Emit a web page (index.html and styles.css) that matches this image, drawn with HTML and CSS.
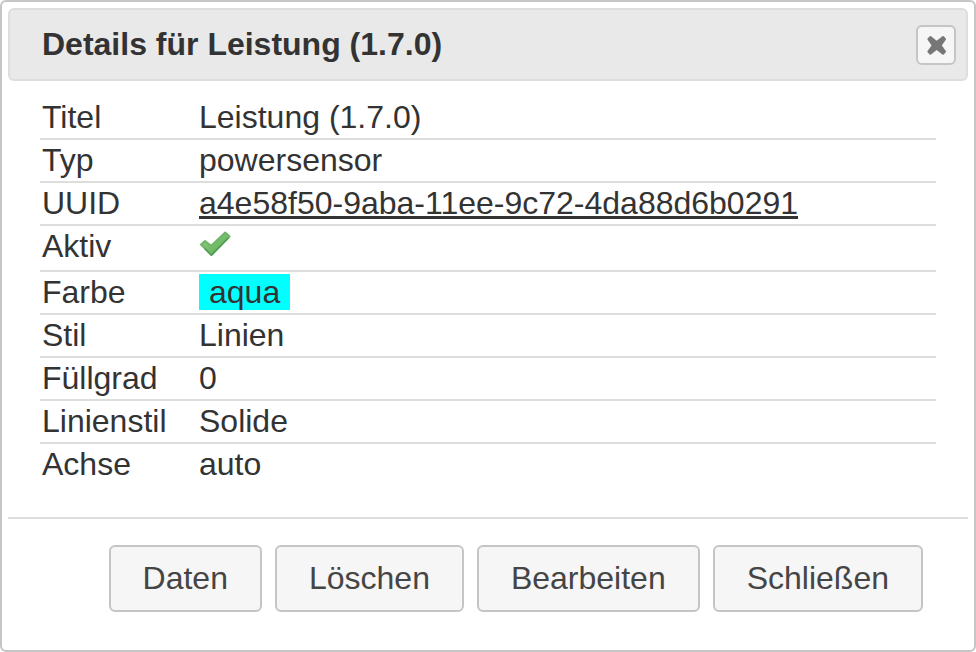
FILE: index.html
```html
<!DOCTYPE html>
<html lang="de">
<head>
<meta charset="utf-8">
<title>Details für Leistung (1.7.0)</title>
<link rel="stylesheet" href="styles.css">
</head>
<body>
<div class="dialog" role="dialog" aria-labelledby="dialog-title">
  <header class="titlebar">
    <h1 class="title" id="dialog-title">Details für Leistung (1.7.0)</h1>
    <button class="close" type="button" aria-label="Dialog schließen">
      <svg class="cross" viewBox="0 0 20 20" aria-hidden="true">
        <path d="M4.4 2 10.7 7 17 2 19 4.2 14.6 10.4 19 16.6 17 18.8 10.7 13.8 4.4 18.8 2.4 16.6 6.8 10.4 2.4 4.2Z"/>
      </svg>
    </button>
  </header>
  <main class="content">
    <table class="details">
      <tr><th scope="row">Titel</th><td>Leistung (1.7.0)</td></tr>
      <tr><th scope="row">Typ</th><td>powersensor</td></tr>
      <tr><th scope="row">UUID</th><td><a class="uuid" href="#a4e58f50-9aba-11ee-9c72-4da88d6b0291">a4e58f50-9aba-11ee-9c72-4da88d6b0291</a></td></tr>
      <tr class="active"><th scope="row">Aktiv</th><td>
        <svg class="tick" viewBox="0 0 32 26" role="img" aria-label="aktiv">
          <defs>
            <linearGradient id="leaf" x1="0" y1="0" x2="1" y2="1">
              <stop offset="0.2" stop-color="#86c879"/>
              <stop offset="0.8" stop-color="#62b35e"/>
            </linearGradient>
          </defs>
          <path d="M2 13.5 6 10 12.2 14.8 26.2 1.6 30.6 5.6 12.5 24Z" fill="url(#leaf)" stroke="#6fb568" stroke-width="2" stroke-linejoin="round"/>
          <path d="M6 18 12.3 24.2 29 7.4" fill="none" stroke="#3f8a40" stroke-opacity="0.7" stroke-width="1.3" stroke-linejoin="round" stroke-linecap="round"/>
        </svg>
      </td></tr>
      <tr><th scope="row">Farbe</th><td><span class="swatch">aqua</span></td></tr>
      <tr><th scope="row">Stil</th><td>Linien</td></tr>
      <tr><th scope="row">Füllgrad</th><td>0</td></tr>
      <tr><th scope="row">Linienstil</th><td>Solide</td></tr>
      <tr><th scope="row">Achse</th><td>auto</td></tr>
    </table>
  </main>
  <footer class="actions">
    <button class="action" type="button">Daten</button>
    <button class="action" type="button">Löschen</button>
    <button class="action" type="button">Bearbeiten</button>
    <button class="action" type="button">Schließen</button>
  </footer>
</div>
</body>
</html>
```
FILE: styles.css
```css
* {
  box-sizing: border-box;
}

body {
  margin: 0;
  background: #fff;
  color: #333;
  font: 32px/37px "Liberation Sans", Arial, sans-serif;
}

.dialog {
  display: flex;
  flex-direction: column;
  min-height: 100vh;
  padding: 6px;
  border: 2px solid #c5c5c5;
  border-radius: 6px;
}

.titlebar {
  display: flex;
  align-items: center;
  justify-content: space-between;
  padding: 15px 10px 14px 32px;
  border: 2px solid #ddd;
  border-radius: 6px;
  background: #e9e9e9;
}

.title {
  margin: 0;
  padding-bottom: 2px;
  font-size: 32px;
  line-height: 37px;
}

.close {
  display: flex;
  align-items: center;
  justify-content: center;
  width: 40px;
  height: 40px;
  padding: 0;
  border: 2px solid #c5c5c5;
  border-radius: 6px;
  background: #f6f6f6;
}

.cross {
  width: 20px;
  height: 20px;
  fill: #777;
  stroke: #777;
  stroke-width: 2;
  stroke-linejoin: round;
}

.content {
  flex: 1;
  padding: 16px 32px 32px;
}

.details {
  width: 100%;
  border-spacing: 0;
}

.details th,
.details td {
  padding: 2px;
  border-bottom: 2px solid #ddd;
  font-weight: normal;
  text-align: left;
  vertical-align: top;
}

.details th {
  width: 157px;
}

.details tr:last-child > * {
  border-bottom: 0;
}

.details .active > * {
  height: 46px;
}

.uuid {
  color: inherit;
  text-decoration: underline;
}

.tick {
  display: block;
  width: 32px;
  height: 26px;
  margin-top: 3px;
}

.swatch {
  padding: 0 10px;
  background: aqua;
}

.actions {
  display: flex;
  flex-wrap: wrap;
  justify-content: flex-end;
  gap: 13px;
  padding: 26px 45px 32px;
  border-top: 2px solid #ddd;
}

.action {
  padding: 13px 32px;
  border: 2px solid #c5c5c5;
  border-radius: 6px;
  background: #f6f6f6;
  color: #454545;
  font: inherit;
}
```
